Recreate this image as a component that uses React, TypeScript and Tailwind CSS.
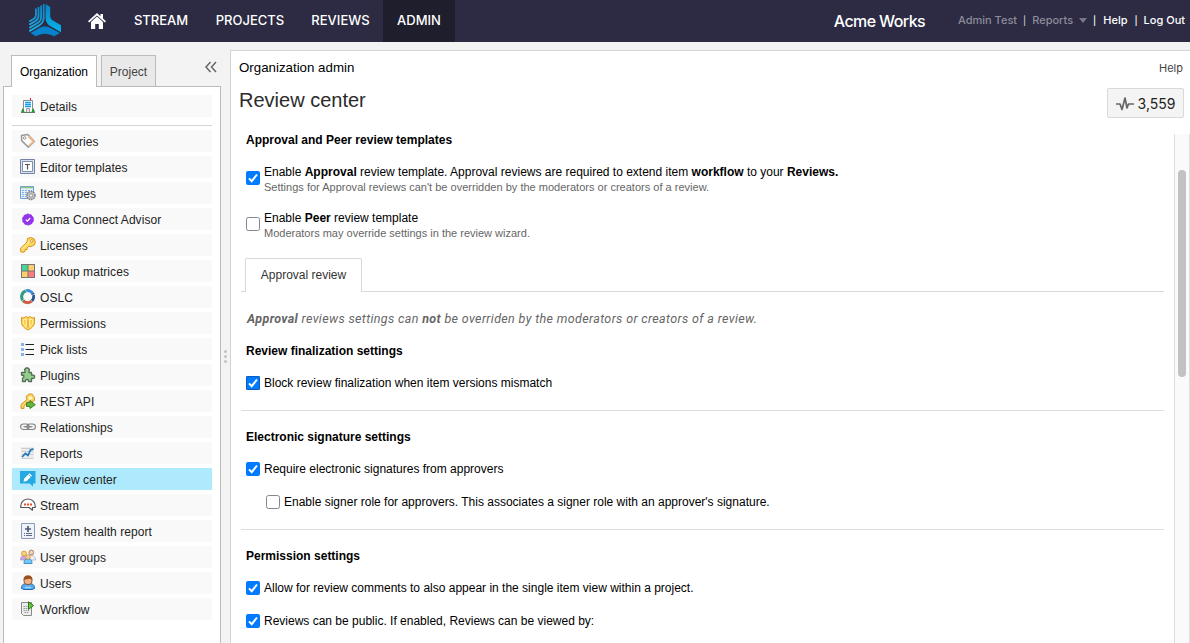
import React from "react";
import clsx from "clsx";

const Logo = () => (
  <svg width="32" height="33" viewBox="0 0 32 33" fill="none">
    <defs>
      <linearGradient id="arm" x1="0" y1="0" x2="0" y2="1">
        <stop offset="0" stopColor="#0c84c4" />
        <stop offset="1" stopColor="#06b3ea" />
      </linearGradient>
      <linearGradient id="stripes" gradientUnits="userSpaceOnUse" x1="12" y1="0" x2="4" y2="28">
        <stop offset="0" stopColor="#0c84c4" />
        <stop offset="1" stopColor="#22b0ea" />
      </linearGradient>
    </defs>
    <path
      d="M16.600 .1 21.200 3V11.500c0 2.400 1 4 2.800 5.100L32 21.300V28.200L22 22.500c-3.500-2-5.400-4.500-5.400-8.500Z"
      fill="url(#arm)"
    />
    <g stroke="url(#stripes)" strokeWidth="1.800">
      <path d="M14.700 .1V13.500c0 4-2 6.400-5 8.100L.3 27.200" />
      <path d="M12.100 1.400V13c0 3-1.300 4.800-4 6.300L.3 23.900" />
      <path d="M9.500 2.900V12c0 2.400-1 3.800-3 5L.3 20.700" />
      <path d="M6.900 4.400V11c0 1.600-.6 2.800-2 3.700L.3 17.500" />
    </g>
    <path
      d="M1.500 29 9.800 24.200c4-2.300 8.400-2.300 12.400 0L30.700 29 25.200 32.200c-6-3.400-12.400-3.400-18.400 0Z"
      fill="#0783cd"
    />
  </svg>
);

const HomeIcon = () => (
  <svg width="18" height="16" viewBox="0 0 18 16">
    <path d="M9 0 12.500 3.200V1H15V5.500L18 8.300 16.800 9.600 9 2.500 1.200 9.600 0 8.300Z" fill="#fff" />
    <path d="M9 3.500 15 9V16H10.800V11H7.200V16H3V9Z" fill="#fff" />
  </svg>
);

const icons: Record<string, React.ReactNode> = {
  details: (
    <>
      <path d="M10.500 0V2.500" stroke="#e02020" />
      <path d="M3.500 14.500V2.500H12.500V14.500" fill="#fff" stroke="#8a8a8a" />
      <path d="M5 4.500H11M5 6.500H11M5 8.500H11" stroke="#1aa0f0" strokeWidth="1.300" />
      <path d="M6.500 14.500V10.500H9.500V14.500" fill="#e4e4e4" stroke="#9a9a9a" />
      <path d="M1 14.500 2.500 10 5 14.500ZM11 14.500 13.500 10 15 14.500Z" fill="#1e9a2e" />
      <path d="M1 14.500H15" stroke="#5f7c5f" />
    </>
  ),
  categories: (
    <>
      <path d="M1.500 2.500 7.800 1.500 14.300 8.400 8.300 14.200 1.700 7.600Z" fill="#fff" stroke="#999" strokeWidth="1.500" strokeLinejoin="round" />
      <path d="M8.500 3.500 13.300 8.400 8.700 12.800" fill="none" stroke="#f6b98a" strokeWidth="1.800" />
      <circle cx="4.700" cy="5" r="1.300" fill="#fff" stroke="#999" />
    </>
  ),
  templates: (
    <>
      <path d="M.5.500H14.500V14.500H.5Z" fill="#d9e2ef" stroke="#7583a5" />
      <path d="M2.500 2.500H12.500V12.500H2.500Z" fill="#fff" stroke="#8190b0" />
      <path d="M5 5.500H10M7.500 5.500V10.500" stroke="#555" strokeWidth="1.200" />
    </>
  ),
  types: (
    <>
      <path d="M.5 1.500H13.500V13.500H.5Z" fill="#e3eefb" stroke="#6e9dd6" />
      <path d="M1 2.500H13" stroke="#91c67a" strokeWidth="1.500" />
      <path d="M2 5.500H12M2 7.500H12M2 9.500H12M2 11.500H8" stroke="#85aee2" strokeDasharray="2 1" />
      <circle cx="11" cy="10.500" r="4" fill="#c9c9c9" stroke="#858585" strokeDasharray="1.600 .7" strokeWidth="1.500" />
      <circle cx="11" cy="10.500" r="1.700" fill="#f8f8f8" stroke="#929292" />
    </>
  ),
  advisor: (
    <>
      <circle cx="8" cy="8.500" r="5.500" fill="#9333ea" stroke="#9333ea" strokeDasharray="2.200 1.200" />
      <path d="M5.800 8.600 7.400 10.100 10.200 7" fill="none" stroke="#fff" strokeWidth="1.300" />
    </>
  ),
  licenses: (
    <>
      <path
        d="M7.500 1.500 10.500.500 14 1.700 15.400 5 14.300 8 11 9.600 9 9.200 7.200 11V12.500H5.200V14.300L3 15.400.600 14.700V11.200L7 5Z"
        fill="#fbd75c" stroke="#d9961c" strokeLinejoin="round"
      />
      <path d="M2 12.500 8 6.500 9 3.500" fill="none" stroke="#fff0b3" />
      <circle cx="11.800" cy="4" r="1.300" fill="#fff" stroke="#c98a1c" strokeWidth=".8" />
    </>
  ),
  matrices: (
    <>
      <path d="M1 1H15V15H1Z" fill="#757575" />
      <path d="M2 2H7.500V7.500H2Z" fill="#41d695" />
      <path d="M8.500 2H14V7.500H8.500ZM2 8.500H7.500V14H2Z" fill="#fbcf6c" />
      <path d="M8.500 8.500H14V14H8.500Z" fill="#fa7d80" />
    </>
  ),
  oslc: (
    <g fill="none" strokeWidth="3">
      <path d="M5.500 1.900A6 6 0 0 1 13 5.200" stroke="#3c8de0" />
      <path d="M12.800 4.500A6 6 0 0 1 11 12.500" stroke="#27518b" />
      <path d="M11.700 12A6 6 0 0 1 3 11.500" stroke="#cf5b43" />
      <path d="M3.500 12A6 6 0 0 1 6.500 1.800" stroke="#2e9b80" />
      <path d="M2 12 5 9.500M5 0 7 4M15 5 11.500 6.500M13.500 14 10.500 10.500" stroke="#f9f9f9" strokeWidth=".6" />
    </g>
  ),
  permissions: (
    <>
      <path d="M1.500 2.500 4 3 5.500 1.500 8 2.500 10.500 1.500 12 3 14.500 2.500V7.500C14.500 11 11 13.500 8 15 5 13.500 1.500 11 1.500 7.500Z" fill="#fbd45a" stroke="#d99a22" />
      <path d="M3.500 4.700 8 4.200 12.500 4.700V7.500C12.500 10 10.200 11.700 8 13 5.800 11.700 3.500 10 3.500 7.500Z" fill="#f9c840" stroke="#fff2b8" strokeWidth=".8" />
      <path d="M6.300 4.500V11M9.700 4.500V11" stroke="#fff0a8" strokeWidth="1.300" />
      <path d="M8 3.500V13" stroke="#dfa136" />
    </>
  ),
  lists: (
    <>
      <path d="M1 2H4V5H1ZM1 7H4V10H1ZM1 12H4V15H1Z" fill="#86b0f0" />
      <path d="M5.500 3.500H14M5.500 8.500H14M5.500 13.500H14" stroke="#222" />
    </>
  ),
  plugins: (
    <path
      d="M5 5.500V4L4.500 2.500 6 1H8L9.500 2.500 9 4V5.500H11.500V8H13L14.500 8.700V10.800L13 11.500H11.500V14.500H8.700L8 12.500H6L5.300 14.500H2.500V11L3.800 10.500V8.500L1.500 8V5.500Z"
      fill="#92d08e" stroke="#5b6b5b" strokeWidth="1.300" strokeLinejoin="round"
    />
  ),
  rest: (
    <>
      <path d="M6 3.500 9 1H12L14.500 4.500V7.500L11 9 8 8.700 4 13.500V15.500L1 15.300V11.500L7 6.500Z" fill="#fbd666" stroke="#d59422" />
      <path d="M9.500 3.500H11.500L12.500 5.500 9.500 7 8 5.500Z" fill="#fff4c5" />
      <path d="M6.500 9.700H10V7.500L15.300 11.700 10 15.500V13.500H6.500Z" fill="#66b53c" stroke="#3d8520" />
    </>
  ),
  relationships: (
    <g fill="none" stroke="#808080" strokeWidth="1.100">
      <rect x=".6" y="5" width="8.500" height="5.500" rx="2.750" />
      <rect x="6.900" y="5" width="8.500" height="5.500" rx="2.750" />
      <path d="M3.500 7.750H12.500" strokeWidth="1.300" />
    </g>
  ),
  reports: (
    <>
      <path d="M1 2H14V14H1Z" fill="#ececec" />
      <path d="M1.500 3.500H13.500M1.500 6.500H13.500M1.500 9.500H13.500M1.500 13.500H13.500" stroke="#cdcdcd" />
      <path d="M2 12 5.500 8.500 8 10.500 10.500 5 13.500 4" fill="none" stroke="#1c75bd" strokeWidth="1.700" />
    </>
  ),
  review: (
    <>
      <path d="M0 0H15.500V12.500H13V15.500L9.500 12.500H0Z" fill="#26a8e2" />
      <path d="M3.500 10.700 4.300 7.500 9.500 2.300 12 4.800 6.800 10Z" fill="#fff" />
      <path d="M8.300 3.500 10.800 6" stroke="#26a8e2" strokeWidth=".8" />
    </>
  ),
  stream: (
    <>
      <path
        d="M.8 10.500C.3 5.500 3.500 2 8 2S15.700 5.500 15.200 10.500H12.500V13.200L9 10.500Z"
        fill="#fff" stroke="#555" strokeWidth="1.200" strokeLinejoin="round"
      />
      <path d="M4 7.500H12.300" stroke="#ed4a23" strokeWidth="2" strokeDasharray="2 1" />
    </>
  ),
  health: (
    <>
      <path d="M1.500 .5H14.500V15.500H1.500Z" fill="#eef2f8" stroke="#8b9abd" />
      <path d="M8 3V9M5 6H11" stroke="#4e5a76" strokeWidth="1.700" />
      <path d="M4 10.500H5M6 10.500H12M4 12.500H5M6 12.500H12" stroke="#5f6a86" />
    </>
  ),
  groups: (
    <>
      <path d="M.5 11C.5 7 2.500 6.500 5 7L6.500 11Z" fill="#c9a6df" stroke="#a88ac8" strokeWidth=".7" />
      <path d="M9 6.500C12.500 6 15.500 7 15.500 11H10Z" fill="#eef0f6" stroke="#a2a6b8" strokeWidth=".7" />
      <circle cx="4" cy="4.500" r="2.500" fill="#f6cd88" stroke="#dba73c" />
      <circle cx="11.300" cy="3.500" r="2.400" fill="#f5d2b4" stroke="#a98668" />
      <path d="M4 14.500C4 10.500 5.500 10 8 10S12 10.500 12 14.500Z" fill="#74c5f6" stroke="#3b93d0" />
      <circle cx="8" cy="8" r="2.200" fill="#f8cfaa" stroke="#d99a4c" />
    </>
  ),
  users: (
    <>
      <path d="M1.500 13.500C1.500 9.500 3.500 8.500 8 8.500S14.500 9.500 14.500 13.500L12 14.500H4Z" fill="#58aef0" stroke="#2467ad" />
      <path d="M5 12.500H11" stroke="#9fd5ff" strokeWidth="1.500" />
      <path d="M4 5C4 1.500 5.500 1 8 1S12 1.500 12 5 10.500 9.500 8 9.500 4 8.500 4 5Z" fill="#f2b284" stroke="#8f4b22" />
      <path d="M4 4.800C4 1 6 .8 8 .8S12 1 12 4.800L9.500 3.800Z" fill="#9b4e20" />
    </>
  ),
  workflow: (
    <>
      <path d="M1.500 1.500H11.500V14.500H3.500L1.500 12.500Z" fill="#ededed" stroke="#8a8a8a" />
      <path d="M3.500 5.500H9M3.500 7.500H9M3.500 9.500H9M4.500 11.500H9" stroke="#999" strokeDasharray="1.500 .6" />
      <path d="M8.500 .8 13.500 4.500 8.500 8.500Z" fill="#69c442" stroke="#287a17" />
    </>
  ),
};

const items = [
  ["categories", "Categories"],
  ["templates", "Editor templates"],
  ["types", "Item types"],
  ["advisor", "Jama Connect Advisor"],
  ["licenses", "Licenses"],
  ["matrices", "Lookup matrices"],
  ["oslc", "OSLC"],
  ["permissions", "Permissions"],
  ["lists", "Pick lists"],
  ["plugins", "Plugins"],
  ["rest", "REST API"],
  ["relationships", "Relationships"],
  ["reports", "Reports"],
  ["review", "Review center"],
  ["stream", "Stream"],
  ["health", "System health report"],
  ["groups", "User groups"],
  ["users", "Users"],
  ["workflow", "Workflow"],
];

const SideItem = ({ icon, label }: { icon: string; label: string }) => (
  <a
    className={clsx(
      "flex h-[22px] items-center gap-1 pl-2 text-[12px] tracking-[0.06px] text-[#222]",
      icon === "review" ? "bg-[#aeeafd]" : "bg-[#f9f9f9]"
    )}
  >
    <svg width="16" height="16" viewBox="0 0 16 16" fill="none">
      {icons[icon]}
    </svg>
    <span className="pt-px">{label}</span>
  </a>
);

const Checkbox = ({ checked, focused }: { checked?: boolean; focused?: boolean }) => (
  <svg width="14" height="14" viewBox="0 0 14 14" fill="none" className="shrink-0">
    {checked ? (
      <>
        <rect width="14" height="14" rx="2" fill="#007aff" />
        <path d="M3 7.400 5.700 10.200 11 3.500" stroke="#fff" strokeWidth="2" />
      </>
    ) : (
      <rect x=".5" y=".5" width="13" height="13" rx="2" fill="#fff" stroke="#85858f" />
    )}
    {focused && <rect x=".5" y=".5" width="13" height="13" stroke="#123f76" strokeDasharray="1 1" />}
  </svg>
);

const Option = ({
  children,
  ...box
}: {
  children: React.ReactNode;
  checked?: boolean;
  focused?: boolean;
}) => (
  <label className="flex h-4 items-center gap-1">
    <Checkbox {...box} />
    <span>{children}</span>
  </label>
);

const Header = () => (
  <header className="flex h-[42px] shrink-0 items-center bg-[#2c2b43] pb-px text-white">
    <div className="ml-[29px] w-[59px]">
      <Logo />
    </div>
    <HomeIcon />
    <nav className="ml-[14px] flex self-stretch text-[13px] font-medium -mb-px">
      <a className="flex w-[82px] items-center justify-center pb-px">STREAM</a>
      <a className="flex w-[96px] items-center justify-center pb-px">PROJECTS</a>
      <a className="flex w-[85px] items-center justify-center pb-px">REVIEWS</a>
      <a className="flex w-[72px] items-center justify-center bg-[#1f1e2d] pb-px">ADMIN</a>
    </nav>
    <div className="ml-auto flex items-center pr-[5px] text-[11px] font-medium">
      <span className="mr-[33px] text-[16px] tracking-[-0.6px]">Acme Works</span>
      <span className="text-[#8d8c9b]">Admin Test</span>
      <span className="mx-[6px] text-[9px] text-[#c5c5cd]">|</span>
      <span className="text-[#8d8c9b]">Reports</span>
      <svg width="8" height="5" viewBox="0 0 8 5" className="ml-[6px]">
        <path d="M0 0H8L4 5Z" fill="#77768a" />
      </svg>
      <span className="ml-[6px] mr-[7px] text-[9px]">|</span>
      <span>Help</span>
      <span className="ml-[7px] mr-[6px] text-[9px]">|</span>
      <span>Log Out</span>
    </div>
  </header>
);

const Sidebar = () => (
  <aside className="flex w-[221px] shrink-0 flex-col pl-[3px] pt-[13px]">
    <div className="z-10 -mb-px flex h-8 pl-2 text-[12px]">
      <div className="flex w-[86px] items-center justify-center border border-b-0 border-[#bbb] bg-white">
        Organization
      </div>
      <div className="ml-1 flex w-[55px] items-center justify-center border border-[#bbb] bg-[#e9e9e9] pt-[2px] text-[#444]">
        Project
      </div>
      <svg width="12" height="12" viewBox="0 0 12 12" className="ml-auto mr-1 mt-[6px]">
        <path d="M5.500 1 1 6 5.500 11M11 1 6.500 6 11 11" fill="none" stroke="#666" strokeWidth="1.500" />
      </svg>
    </div>
    <div className="flex grow flex-col border border-b-0 border-[#bbb] bg-white px-2 pt-2">
      <SideItem icon="details" label="Details" />
      <div className="mb-1 mt-2 border-t border-[#d5d5d5]" />
      <div className="flex flex-col gap-1">
        {items.map(([icon, label]) => (
          <SideItem key={icon} icon={icon} label={label} />
        ))}
      </div>
    </div>
  </aside>
);

const Settings = () => (
  <div className="grow pl-[10px] pr-[10px] text-[12px] leading-4">
    <div className="pl-[5px]">
      <h3 className="font-bold">Approval and Peer review templates</h3>

      <label className="mt-4 flex gap-1">
        <span className="pt-[7px]">
          <Checkbox checked />
        </span>
        <span>
          Enable <b>Approval</b> review template. Approval reviews are required to extend item{" "}
          <b>workflow</b> to your <b>Reviews.</b>
          <span className="block text-[11px] leading-[15px] tracking-[0.01px] text-[#666]">
            Settings for Approval reviews can't be overridden by the moderators or creators of a
            review.
          </span>
        </span>
      </label>

      <label className="mt-[15px] flex gap-1">
        <span className="pt-[7px]">
          <Checkbox />
        </span>
        <span>
          Enable <b>Peer</b> review template
          <span className="block text-[11px] leading-[15px] text-[#666]">
            Moderators may override settings in the review wizard.
          </span>
        </span>
      </label>
    </div>

    <div className="mt-[17px] flex h-[34px] border-b border-[#d9d9d9] pl-1">
      <div className="-mb-px flex w-[117px] items-center justify-center rounded-t-[2px] border border-b-0 border-[#d9d9d9] bg-white pb-[2px] text-[#333]">
        Approval review
      </div>
    </div>

    <div className="pl-[5px]">
      <p className="mt-[19px] pl-px font-[Roboto,sans-serif] text-[12.5px] italic tracking-[0.355px] text-[#666]">
        <b>Approval</b> reviews settings can <b>not</b> be overriden by the moderators or creators
        of a review.
      </p>
      <h3 className="mb-4 mt-4 font-bold">Review finalization settings</h3>
      <Option checked focused>
        Block review finalization when item versions mismatch
      </Option>
    </div>

    <hr className="mb-[18px] mt-[19px] border-[#dedede]" />

    <div className="pl-[5px]">
      <h3 className="mb-4 font-bold">Electronic signature settings</h3>
      <Option checked>Require electronic signatures from approvers</Option>
      <div className="mt-[17px] pl-5">
        <Option>
          Enable signer role for approvers. This associates a signer role with an approver's
          signature.
        </Option>
      </div>
    </div>

    <hr className="mb-[18px] mt-[19px] border-[#dedede]" />

    <div className="pl-[5px]">
      <h3 className="mb-4 font-bold">Permission settings</h3>
      <Option checked>
        Allow for review comments to also appear in the single item view within a project.
      </Option>
      <div className="mt-[17px]">
        <Option checked>Reviews can be public. If enabled, Reviews can be viewed by:</Option>
      </div>
    </div>
  </div>
);

const App = () => {
  return (
    <div className="flex h-[643px] w-[1190px] flex-col overflow-hidden bg-[#f3f3f3] font-['Liberation_Sans',Arial,sans-serif] text-black">
      <div className="font-[Inter,sans-serif]">
        <Header />
      </div>
      <div className="flex min-h-0 grow">
        <Sidebar />
        <div className="flex w-[9px] flex-col items-center justify-center gap-[2px] pt-[27px]">
          <i className="size-[3px] rounded-full bg-[#c3c3c3]" />
          <i className="size-[3px] rounded-full bg-[#c3c3c3]" />
          <i className="size-[3px] rounded-full bg-[#c3c3c3]" />
        </div>
        <main className="mt-2 flex grow flex-col border-l border-t border-[#d3d3d3] bg-white">
          <div className="flex h-[81px] shrink-0 justify-between pl-2 pr-[6px]">
            <div>
              <div className="mt-2 text-[13.3px] leading-[18px]">Organization admin</div>
              <h1 className="mt-[10px] text-[20px] leading-[26px] text-[#2b2b2b]">Review center</h1>
            </div>
            <div className="flex flex-col items-end font-[Inter,sans-serif]">
              <a className="mr-px mt-[9px] text-[11px] leading-4 text-[#444]">Help</a>
              <div className="mt-3 flex h-[30px] w-[77px] items-center justify-center gap-1 rounded-[2px] border border-[#d9d9d9] bg-[#f4f4f4] text-[14px] text-[#222]">
                <svg width="18" height="14" viewBox="0 0 18 14" fill="none" className="mt-px">
                  <path d="M0 7H4L6 12.500 9 1 11 11 12.500 7H18" stroke="#666" strokeWidth="1.700" strokeLinejoin="round" />
                </svg>
                3,559
              </div>
            </div>
          </div>
          <div className="flex min-h-0 grow">
            <Settings />
            <div className="mt-[2px] w-4 shrink-0 border-l border-r border-[#dfdfdf] bg-[#fafafa] pl-[3px] pt-9">
              <div className="h-[207px] w-2 rounded-full bg-[#c2c2c2]" />
            </div>
          </div>
        </main>
      </div>
    </div>
  );
};

export default App;
